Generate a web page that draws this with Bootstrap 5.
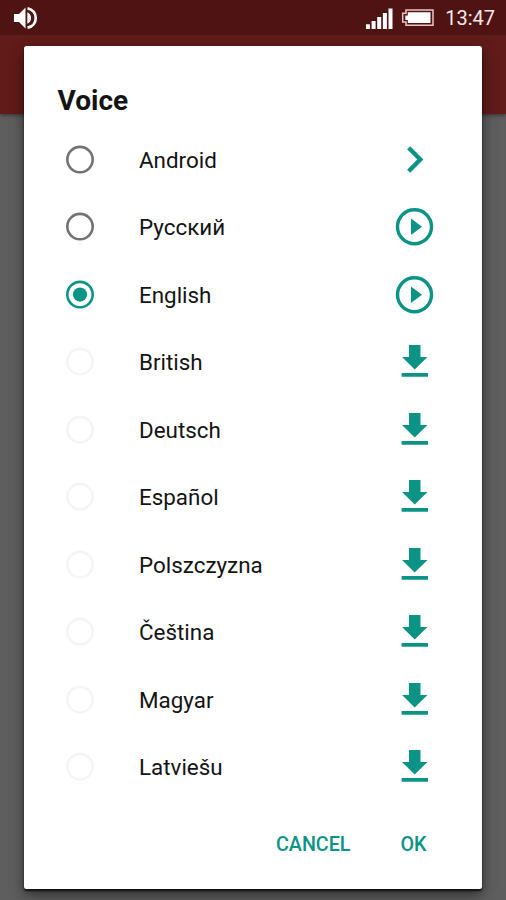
<!DOCTYPE html>
<html lang="en">
<head>
<meta charset="utf-8">
<meta name="viewport" content="width=device-width, initial-scale=1">
<title>Voice</title>
<link href="https://cdn.jsdelivr.net/npm/bootstrap@5.3.0/dist/css/bootstrap.min.css" rel="stylesheet">
<style>
  :root { --teal: #0b9485; }
  body { font-family: Roboto, "Noto Sans", sans-serif; background: #5e5e5e; color: #141414; height: 900px; }
  .status-bar { height: 35px; background: #501314; padding: 0 11px 0 13px; }
  .clock { font-size: 20px; line-height: 36px; color: #f6e9e7; }
  .app-bar { height: 79px; background: #611b19; box-shadow: 0 1px 4px rgba(0,0,0,.5); }
  .voice-dialog { left: 24px; top: 46px; width: 458px; height: 842.5px; border-radius: 2.5px; background: #fff;
    box-shadow: 0 2px 2px rgba(0,0,0,.75), 0 6px 14px rgba(0,0,0,.5); }
  .voice-title { font-size: 28px; line-height: 32px; font-weight: 700; padding: 39px 33.5px 0; height: 79.5px; }
  .voice-row { height: 67.5px; padding: 0 47px 0 41.5px; }
  .voice-row .dot { width: 29px; height: 29px; margin-right: 44.5px; color: #727272; }
  .voice-row .dot.on, .act { color: var(--teal); }
  .voice-row .dot.off { color: #f5f5f5; }
  .voice-label { font-size: 22.4px; line-height: 28px; padding-top: .5px; }
  .act { width: 41px; height: 41px; }
  .dialog-btn { font-size: 19.7px; line-height: 24px; font-weight: 500; color: var(--teal); }
  .dialog-actions { padding: 32.5px 55.5px 0 0; gap: 50px; }
</style>
</head>
<body class="m-0 overflow-hidden position-relative">
<svg class="d-none" xmlns="http://www.w3.org/2000/svg">
  <symbol id="radio" viewBox="0 0 29 29"><circle cx="14" cy="14.6" r="12.7" fill="none" stroke="currentColor" stroke-width="2.6"/></symbol>
  <symbol id="radio-on" viewBox="0 0 29 29"><circle cx="14" cy="14.6" r="12.7" fill="none" stroke="currentColor" stroke-width="2.6"/><circle cx="14" cy="14.6" r="7.1" fill="currentColor"/></symbol>
  <symbol id="next" viewBox="0 0 41 41"><path d="M14.7 8.800 26.300 20.500 14.700 32.200" fill="none" stroke="currentColor" stroke-width="4.400"/></symbol>
  <symbol id="play" viewBox="0 0 41 41"><circle cx="20.5" cy="20.7" r="17" fill="none" stroke="currentColor" stroke-width="3.4"/><path d="M17 12.400v16.600L28 20.700z" fill="currentColor"/></symbol>
  <symbol id="download" viewBox="0 0 41 41"><path d="M15 4h11.500v12H33.500L20.700 28.500 8 16h7zM7.600 32h26.400v3.700H7.600z" fill="currentColor"/></symbol>
</svg>

<header class="status-bar d-flex justify-content-between position-relative">
  <svg class="mt-1" width="26" height="28" viewBox="0 0 26 28" fill="#fff"><path d="M1 10h5l6.500-6.500v21L6 18H1zM14.300 8.200c5 2 5 9.600 0 11.600z"/><path d="M14.500 4.300c11 2 11 17.400 0 19.400" fill="none" stroke="#fff" stroke-width="2.700"/></svg>
  <div class="d-flex">
    <svg width="80" height="35" viewBox="0 0 80 35" fill="#fff">
      <path d="M1 24.300h3.900V29H1zM6.600 21h4v8h-4zM12.200 17h4v12h-4zM17.900 13h4v16h-4zM23.500 8.500h4V29h-4z"/>
      <path d="M41 9.900h27v15.400H41v-3.200h-3.300v-8.800H41z" fill="none" stroke="#e9c5c2" stroke-width="1.500"/>
      <path d="M42.800 12.200h22.700v10.900H42.800v-3.200h-2.500v-4.500h2.500z"/>
    </svg>
    <span class="clock">13:47</span>
  </div>
</header>
<div class="app-bar"></div>

<main class="voice-dialog position-absolute" role="dialog" aria-labelledby="dialog-title">
  <h1 class="voice-title m-0" id="dialog-title">Voice</h1>
  <ul class="list-unstyled m-0">
    <li class="voice-row d-flex align-items-center"><svg class="dot"><use href="#radio"/></svg><span class="voice-label flex-grow-1">Android</span><svg class="act"><use href="#next"/></svg></li>
    <li class="voice-row d-flex align-items-center"><svg class="dot"><use href="#radio"/></svg><span class="voice-label flex-grow-1">Русский</span><svg class="act"><use href="#play"/></svg></li>
    <li class="voice-row d-flex align-items-center"><svg class="dot on"><use href="#radio-on"/></svg><span class="voice-label flex-grow-1">English</span><svg class="act"><use href="#play"/></svg></li>
    <li class="voice-row d-flex align-items-center"><svg class="dot off"><use href="#radio"/></svg><span class="voice-label flex-grow-1">British</span><svg class="act"><use href="#download"/></svg></li>
    <li class="voice-row d-flex align-items-center"><svg class="dot off"><use href="#radio"/></svg><span class="voice-label flex-grow-1">Deutsch</span><svg class="act"><use href="#download"/></svg></li>
    <li class="voice-row d-flex align-items-center"><svg class="dot off"><use href="#radio"/></svg><span class="voice-label flex-grow-1">Español</span><svg class="act"><use href="#download"/></svg></li>
    <li class="voice-row d-flex align-items-center"><svg class="dot off"><use href="#radio"/></svg><span class="voice-label flex-grow-1">Polszczyzna</span><svg class="act"><use href="#download"/></svg></li>
    <li class="voice-row d-flex align-items-center"><svg class="dot off"><use href="#radio"/></svg><span class="voice-label flex-grow-1">Čeština</span><svg class="act"><use href="#download"/></svg></li>
    <li class="voice-row d-flex align-items-center"><svg class="dot off"><use href="#radio"/></svg><span class="voice-label flex-grow-1">Magyar</span><svg class="act"><use href="#download"/></svg></li>
    <li class="voice-row d-flex align-items-center"><svg class="dot off"><use href="#radio"/></svg><span class="voice-label flex-grow-1">Latviešu</span><svg class="act"><use href="#download"/></svg></li>
  </ul>
  <div class="dialog-actions d-flex justify-content-end">
    <button class="btn p-0 border-0 dialog-btn" type="button">CANCEL</button>
    <button class="btn p-0 border-0 dialog-btn" type="button">OK</button>
  </div>
</main>
<script src="https://cdn.jsdelivr.net/npm/bootstrap@5.3.0/dist/js/bootstrap.bundle.min.js"></script>
</body>
</html>
